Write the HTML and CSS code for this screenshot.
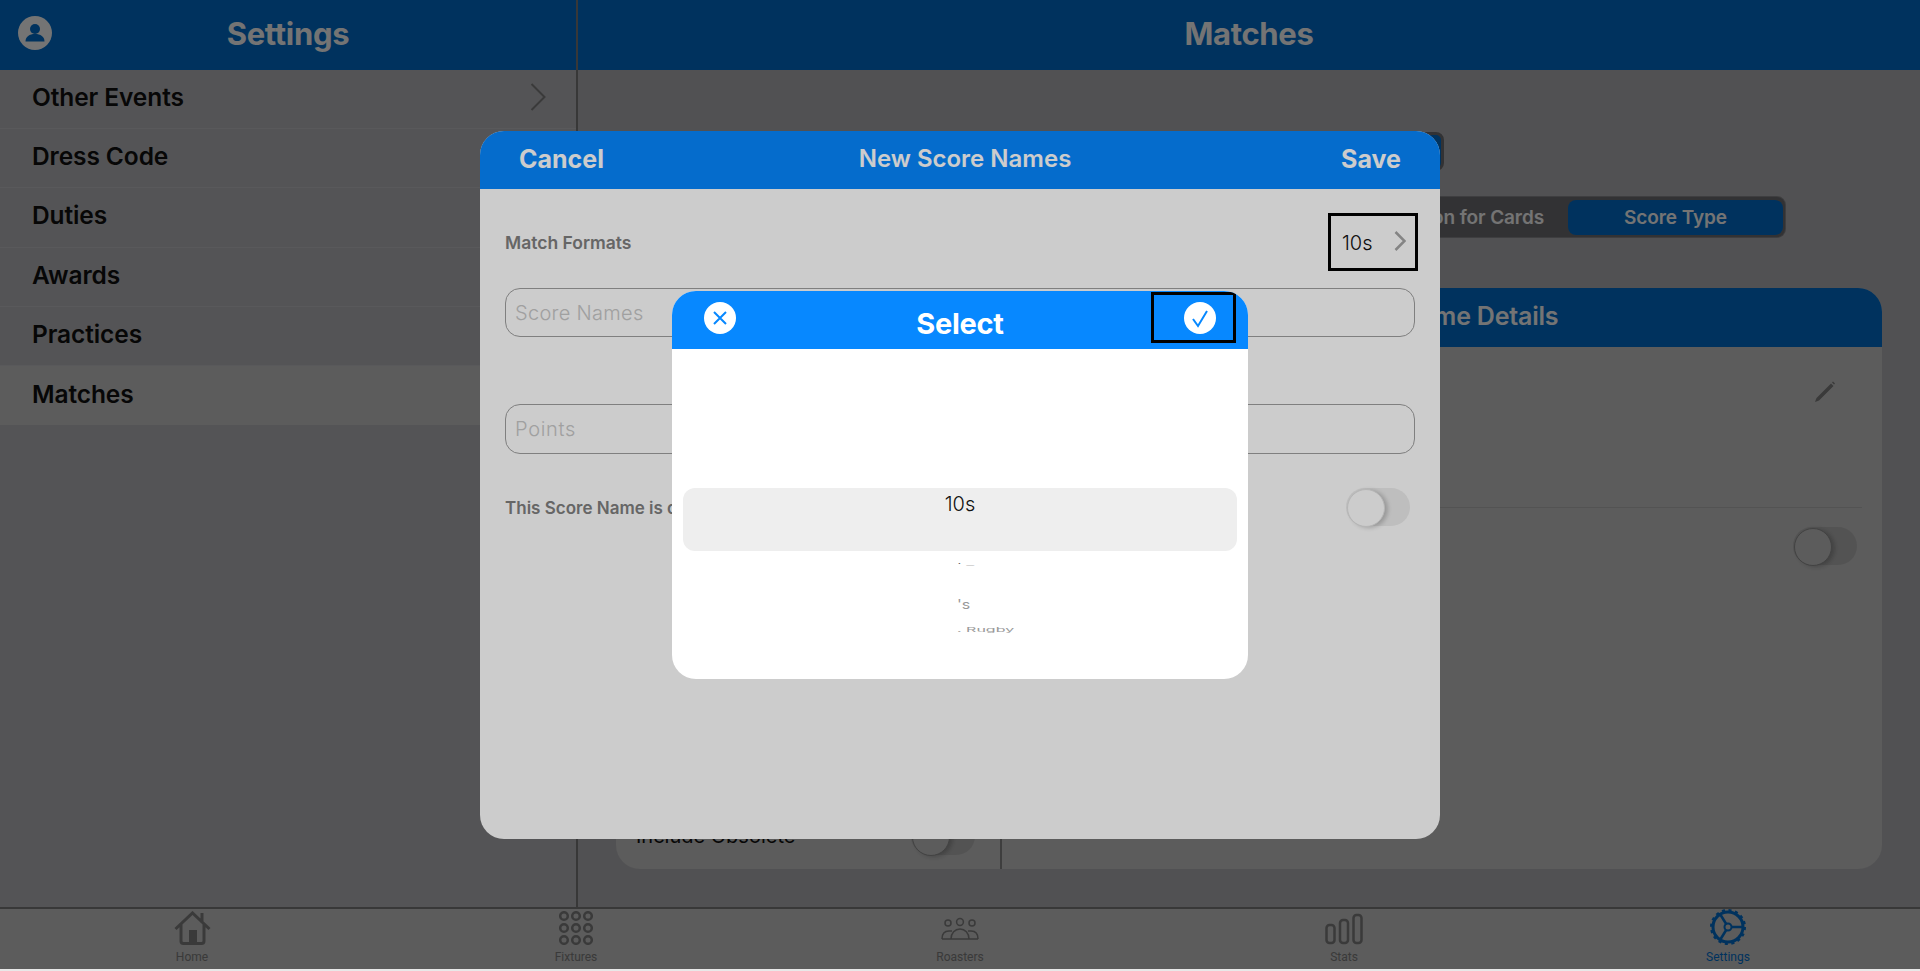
FILE: index.html
```html
<!DOCTYPE html>
<html lang="en">
<head>
  <meta charset="UTF-8">
  <title>Settings</title>
  <meta name="viewport" content="width=device-width, initial-scale=1.0">
  <link rel="stylesheet" href="styles.css">
</head>
<body>

<div class="app">
  <div class="columns">

    <!-- Settings list -->
    <aside class="sidebar">
      <header class="top-bar">
        <svg class="avatar" viewBox="0 0 34 34">
          <circle cx="17" cy="17" r="17" fill="#fff"/>
          <circle cx="17" cy="13" r="5" fill="#0070d0"/>
          <path d="M7.5 25.5c0-5 4-7.5 9.5-7.5s9.500 2.500 9.500 7.500z" fill="#0070d0"/>
        </svg>
        <h1>Settings</h1>
      </header>
      <ul class="menu">
        <li>Other Events
          <svg class="menu-chevron" viewBox="0 0 16 28"><path d="M1.500 1l13 13-13 13"/></svg>
        </li>
        <li>Dress Code</li>
        <li>Duties</li>
        <li>Awards</li>
        <li>Practices</li>
        <li class="current">Matches</li>
      </ul>
    </aside>

    <!-- Matches page -->
    <main class="matches">
      <header class="top-bar"><h1>Matches</h1></header>
      <div class="matches-body">
        <div class="pill-top"></div>
        <div class="segments">
          <span>Reason for Cards</span>
          <span class="active">Score Type</span>
        </div>
        <section class="panel">
          <div class="panel-list">
            <div class="obsolete-row">
              <span>Include Obsolete</span>
              <span class="switch"></span>
            </div>
          </div>
          <div class="panel-detail">
            <h2>Score Name Details</h2>
            <div class="detail-block">
              <svg class="pencil" viewBox="0 0 22 22"><path d="M1 21l1.500-4L17 2.500 19.500 5 5 19.500zM18 1.500l1-1 2 2-1 1z"/></svg>
            </div>
            <div class="detail-switch"><span class="switch"></span></div>
          </div>
        </section>
      </div>
    </main>
  </div>

  <!-- Bottom tabs -->
  <nav class="tabs">
    <a class="tab">
      <svg viewBox="0 0 37 34" width="37" height="34">
        <path d="M1.500 18L18.500 2l17 16M7 13v17a2.500 2.500 0 0 0 2.500 2.500h18A2.500 2.500 0 0 0 30 30V13M28 2v10" fill="none" stroke="currentColor" stroke-width="3"/>
        <rect x="15" y="19" width="8" height="13" fill="currentColor"/>
      </svg>
      Home
    </a>
    <a class="tab">
      <svg viewBox="0 0 34 34" width="34" height="34" fill="none" stroke="currentColor" stroke-width="2.500">
        <circle cx="5" cy="5" r="3.800"/><circle cx="17" cy="5" r="3.800"/><circle cx="29" cy="5" r="3.800"/>
        <circle cx="5" cy="17" r="3.800"/><circle cx="17" cy="17" r="3.800"/><circle cx="29" cy="17" r="3.800"/>
        <circle cx="5" cy="29" r="3.800"/><circle cx="17" cy="29" r="3.800"/><circle cx="29" cy="29" r="3.800"/>
      </svg>
      Fixtures
    </a>
    <a class="tab">
      <svg viewBox="0 0 38 34" width="38" height="34" fill="none" stroke="currentColor" stroke-width="1.500">
        <circle cx="7" cy="12" r="3"/><circle cx="19" cy="11" r="3.400"/><circle cx="31" cy="12" r="3"/>
        <path d="M1 28c0-6 3-8 7-8h3M37 28c0-6-3-8-7-8h-3"/>
        <path d="M1 28h36M10 28c0-6 4-10 9-10s9 4 9 10"/>
      </svg>
      Roasters
    </a>
    <a class="tab">
      <svg viewBox="0 0 38 34" width="38" height="34" fill="none" stroke="currentColor" stroke-width="2.500">
        <rect x="1.500" y="14" width="8" height="18" rx="3"/>
        <rect x="15" y="9" width="8" height="23" rx="3"/>
        <rect x="28.500" y="4" width="8" height="28" rx="3"/>
      </svg>
      Stats
    </a>
    <a class="tab selected">
      <svg viewBox="0 0 36 36" width="36" height="36" fill="none" stroke="currentColor">
        <circle cx="18" cy="18" r="15" stroke-width="3"/>
        <circle cx="18" cy="18" r="16.500" stroke-width="3" stroke-dasharray="3 3.480"/>
        <circle cx="18" cy="18" r="3.500" stroke-width="2"/>
        <path d="M21.500 18H33M16.200 15L10 5M16.200 21L10 31" stroke-width="2.500"/>
      </svg>
      Settings
    </a>
  </nav>

  <!-- New score name form -->
  <div class="scrim scrim-page">
    <section class="modal">
      <header class="modal-head">
        <span class="modal-cancel">Cancel</span>
        <span class="modal-title">New Score Names</span>
        <span class="modal-save">Save</span>
      </header>
      <div class="modal-body">
        <div class="format-row">
          <span class="field-label">Match Formats</span>
          <div class="format-value">
            <span>10s</span>
            <svg viewBox="0 0 12 20"><path d="M1.500 1l9 9-9 9"/></svg>
          </div>
        </div>
        <div class="field">Score Names</div>
        <div class="field field-points">Points</div>
        <div class="counted-row">
          <span class="field-label field-label-long">This Score Name is counted in the total</span>
          <span class="switch switch-light"></span>
        </div>
      </div>
    </section>
  </div>

  <!-- Match format picker -->
  <div class="scrim scrim-modal">
    <section class="picker">
      <header class="picker-head">
        <span class="round-btn">
          <svg viewBox="0 0 32 32"><path d="M10 10l12 12M22 10L10 22"/></svg>
        </span>
        <span class="picker-title">Select</span>
        <span class="picker-done">
          <span class="round-btn">
            <svg viewBox="0 0 32 32"><path d="M9 17l5 7 9-15"/></svg>
          </span>
        </span>
      </header>
      <div class="wheel">
        <div class="wheel-current">10s</div>
        <div class="ghost ghost-a">' –</div>
        <div class="ghost ghost-b">'s</div>
        <div class="ghost ghost-c">. Rugby</div>
      </div>
    </section>
  </div>
</div>

</body>
</html>
```

FILE: styles.css
```css
* { box-sizing: border-box; }

body {
  margin: 0;
  background: #e8e8e8;
  font-family: Inter, "Noto Sans", sans-serif;
  color: #111;
}

.app {
  position: relative;
  display: flex;
  flex-direction: column;
  height: 969px;
  overflow: hidden;
}

.columns {
  display: flex;
  height: 907px;
}

/* Top bars */
.top-bar {
  position: relative;
  display: flex;
  align-items: center;
  justify-content: center;
  height: 70px;
  padding-bottom: 4px;
  background: #0070d0;
  color: #fff;
  flex-shrink: 0;
}
.top-bar h1 {
  margin: 0;
  font-size: 31px;
  font-weight: 700;
  letter-spacing: -0.3px;
}
.avatar {
  position: absolute;
  left: 18px;
  top: 16px;
  width: 34px;
  height: 34px;
}

/* Sidebar */
.sidebar {
  width: 578px;
  flex-shrink: 0;
  background: #bbbbbf;
  border-right: 2px solid #7e7e7e;
}
.menu {
  list-style: none;
  margin: 0;
  padding: 0;
}
.menu li {
  display: flex;
  align-items: center;
  justify-content: space-between;
  height: 59.200px;
  padding: 0 30px 4px 32px;
  border-bottom: 1px solid #c6c6c8;
  font-size: 24.500px;
  font-weight: 600;
  letter-spacing: -0.1px;
}
.menu li.current {
  background: #cacaca;
  border-bottom: none;
}
.menu-chevron {
  width: 16px;
  height: 28px;
  fill: none;
  stroke: #808080;
  stroke-width: 2;
}

/* Matches */
.matches {
  flex: 1;
  display: flex;
  flex-direction: column;
  background: #b4b4b8;
}
.matches-body {
  flex: 1;
  display: flex;
  flex-direction: column;
  padding: 62px 38px 0;
}
.pill-top {
  align-self: flex-end;
  width: 420px;
  height: 39px;
  margin-right: 438px;
  background: #0070d0;
  border: 3px solid #707074;
  border-radius: 8px;
}
.segments {
  align-self: flex-end;
  display: flex;
  align-items: center;
  height: 40px;
  margin: 26px 97px 0 0;
  padding: 0 2px;
  background: #707074;
  border-radius: 8px;
  box-shadow: 0 0 0 1px #8a8a8e;
  color: #fff;
  font-size: 19px;
  font-weight: 600;
}
.segments span {
  padding: 0 24px;
  letter-spacing: -0.1px;
}
.segments .active {
  display: flex;
  align-items: center;
  justify-content: center;
  width: 215px;
  height: 35px;
  background: #0070d0;
  border-radius: 8px;
}

.panel {
  display: flex;
  height: 581px;
  margin-top: 51px;
  background: #cacaca;
  border-radius: 24px;
  overflow: hidden;
}
.panel-list {
  display: flex;
  align-items: flex-end;
  width: 386px;
  padding: 0 25px 14px 20px;
  border-right: 2px solid #8a8a8a;
}
.obsolete-row {
  flex: 1;
  display: flex;
  align-items: center;
  justify-content: space-between;
  font-size: 20px;
}
.panel-detail {
  flex: 1;
  display: flex;
  flex-direction: column;
}
.panel-detail h2 {
  margin: 0;
  height: 59px;
  line-height: 56px;
  background: #0070d0;
  color: #fff;
  font-size: 25px;
  font-weight: 600;
  letter-spacing: -0.2px;
  text-align: center;
}
.detail-block {
  display: flex;
  justify-content: flex-end;
  height: 161px;
  margin: 0 20px;
  padding: 34px 26px 0 0;
  border-bottom: 1px solid #b8b8b8;
}
.pencil {
  width: 22px;
  height: 22px;
  fill: #808080;
}
.detail-switch {
  display: flex;
  justify-content: flex-end;
  padding: 19px 25px 0 0;
}

/* Toggle */
.switch {
  position: relative;
  display: block;
  width: 64px;
  height: 38px;
  background: #b8b8b8;
  border-radius: 19px;
}
.switch::before {
  content: "";
  position: absolute;
  left: 1px;
  top: 1px;
  width: 36px;
  height: 36px;
  background: #cacaca;
  border: 1px solid #949494;
  border-radius: 50%;
  box-shadow: 3px 1px 4px rgba(0, 0, 0, 0.2);
}
.switch-light { background: #eeeeee; }
.switch-light::before {
  background: #fff;
  border-color: #e4e4e4;
}

/* Bottom tabs */
.tabs {
  flex: 1;
  display: grid;
  grid-template-columns: repeat(5, 1fr);
  background: #cacaca;
  border-top: 2px solid #7e7e7e;
  color: #808080;
}
.tab {
  display: flex;
  flex-direction: column;
  align-items: center;
  justify-content: flex-end;
  gap: 5px;
  padding-bottom: 5px;
  font-family: Roboto, sans-serif;
  font-size: 12px;
}
.tab.selected { color: #0070d0; }

/* Overlays */
.scrim {
  position: absolute;
  inset: 0;
  display: flex;
  align-items: center;
  justify-content: center;
}
.scrim-page { background: rgba(0, 0, 0, 0.43); }
.scrim-modal { background: rgba(0, 0, 0, 0.2); }

/* New score modal */
.modal {
  width: 960px;
  height: 708px;
  background: #fff;
  border-radius: 24px;
  overflow: hidden;
}
.modal-head {
  display: grid;
  grid-template-columns: 1fr auto 1fr;
  align-items: center;
  height: 58px;
  padding: 0 39px 2px;
  background: #0788ff;
  color: #fff;
  font-size: 25px;
  font-weight: 700;
}
.modal-title {
  padding-left: 10px;
  font-size: 24px;
  font-weight: 600;
}
.modal-save { justify-self: end; }
.modal-body { padding: 24px 25px 0; }
.format-row {
  display: flex;
  align-items: center;
  justify-content: space-between;
  margin-right: -3px;
}
.field-label {
  position: relative;
  top: 1px;
  color: #808080;
  font-size: 17.500px;
  font-weight: 600;
  white-space: nowrap;
}
.field-label-long { font-size: 17px; }
.format-value {
  display: flex;
  align-items: center;
  justify-content: space-between;
  width: 90px;
  height: 58px;
  padding: 2px 9px 0 11px;
  border: 3px solid #000;
  font-size: 20px;
  font-weight: 300;
}
.format-value svg {
  width: 12px;
  height: 20px;
  margin-top: -3px;
  fill: none;
  stroke: #a6a6a6;
  stroke-width: 2.500;
}
.field {
  display: flex;
  align-items: center;
  height: 49px;
  margin-top: 17px;
  padding: 1px 0 0 9px;
  border: 1.500px solid #9f9f9f;
  border-radius: 15px;
  color: #c8c8c8;
  font-size: 20px;
  font-weight: 300;
  letter-spacing: 0.3px;
}
.field-points {
  height: 50px;
  margin-top: 67px;
  letter-spacing: 0.7px;
}
.counted-row {
  display: flex;
  align-items: center;
  justify-content: space-between;
  margin: 34px 5px 0 0;
}

/* Picker */
.picker {
  width: 576px;
  height: 388px;
  background: #fff;
  border-radius: 24px;
  overflow: hidden;
}
.picker-head {
  display: grid;
  grid-template-columns: 1fr auto 1fr;
  height: 58px;
  padding: 0 12px 0 32px;
  background: #0788ff;
  color: #fff;
}
.round-btn {
  display: block;
  width: 32px;
  height: 32px;
  margin-top: 11px;
  background: #fff;
  border-radius: 50%;
}
.round-btn svg {
  display: block;
  fill: none;
  stroke: #0788ff;
  stroke-width: 2;
}
.picker-title {
  margin-right: 20px;
  padding-top: 15px;
  font-size: 29px;
  font-weight: 700;
  letter-spacing: -0.3px;
}
.picker-done {
  justify-self: end;
  width: 85px;
  height: 51px;
  margin-top: 1px;
  padding-left: 30px;
  border: 3px solid #000;
}
.picker-done .round-btn { margin-top: 7px; }

.wheel { padding: 139px 11px 0; }
.wheel-current {
  height: 63px;
  padding-top: 4px;
  background: #eeeeee;
  border-radius: 12px;
  font-size: 20px;
  font-weight: 300;
  text-align: center;
}
.ghost {
  padding-left: 274px;
  color: #999;
  transform-origin: left center;
  white-space: nowrap;
}
.ghost-a {
  height: 16px;
  margin-top: 6px;
  color: #666;
  font-size: 16px;
  line-height: 16px;
  transform: scaleY(0.2);
}
.ghost-b {
  height: 20px;
  margin-top: 21px;
  font-size: 16px;
  line-height: 20px;
  transform: scaleY(0.8);
}
.ghost-c {
  height: 16px;
  margin-top: 8px;
  font-size: 16px;
  line-height: 16px;
  transform: scaleY(0.35);
}
```
